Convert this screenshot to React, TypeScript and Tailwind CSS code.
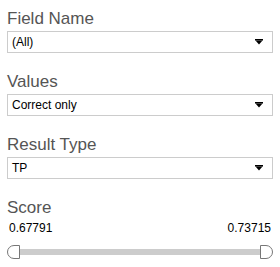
import React from 'react';

const fields = [
  { label: 'Field Name', value: '(All)' },
  { label: 'Values', value: 'Correct only' },
  { label: 'Result Type', value: 'TP' },
];

function Caret() {
  return (
    <svg width="8" height="6" viewBox="0 0 8 6" className="shrink-0">
      <rect x="0" y="0" width="8" height="1.5" fill="#000" />
      <path d="M0.5 1.5 L7.5 1.5 L4 5.5 Z" fill="#000" />
    </svg>
  );
}

export default function App() {
  return (
    <div
      className="w-[280px] h-[267px] bg-white pl-[7px] pr-[7px] pt-[9px]"
      style={{ fontFamily: '"Liberation Sans", Arial, sans-serif' }}
    >
      {fields.map((f) => (
        <div key={f.label} className="mb-[19px]">
          <div className="text-[17px] leading-[20px] text-[#555] mb-[2px]">{f.label}</div>
          <div className="h-[22px] border border-[#ccc] flex items-center justify-between pl-[4px] pr-[9px]">
            <span className="text-[12px] text-black">{f.value}</span>
            <Caret />
          </div>
        </div>
      ))}

      <div>
        <div className="text-[17px] leading-[20px] text-[#555]">Score</div>
        <div className="flex justify-between text-[12px] text-black px-[2px] mt-[1px]">
          <span>0.67791</span>
          <span>0.73715</span>
        </div>
        <div className="relative h-[14px] mt-[8px]">
          <div className="absolute left-[6px] right-[6px] top-[4px] h-[6px] bg-[#ccc]" />
          <div className="absolute left-0 top-0 w-[13px] h-[14px] bg-white border border-[#777] rounded-l-full" />
          <div className="absolute right-0 top-0 w-[13px] h-[14px] bg-white border border-[#777] rounded-r-full" />
        </div>
      </div>
    </div>
  );
}
